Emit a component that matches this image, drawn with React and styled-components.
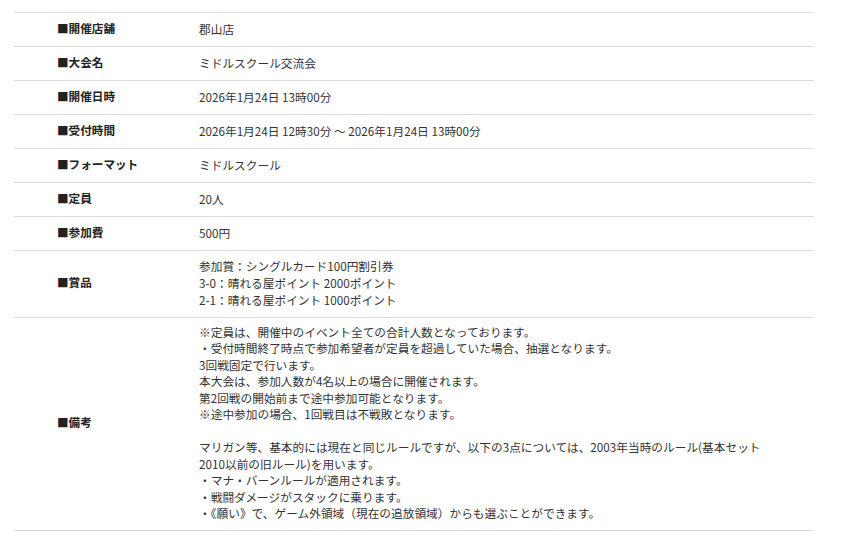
import React from 'react'
import styled, { createGlobalStyle } from 'styled-components'

const GlobalStyle = createGlobalStyle`
  body {
    margin: 0;
    background: #fff;
    font-family: "Noto Sans CJK JP", "Noto Sans", sans-serif;
  }
`

const rows = [
  { label: '開催店舗', value: ['郡山店'] },
  { label: '大会名', value: ['ミドルスクール交流会'] },
  { label: '開催日時', value: ['2026年1月24日 13時00分'] },
  { label: '受付時間', value: ['2026年1月24日 12時30分 〜 2026年1月24日 13時00分'] },
  { label: 'フォーマット', value: ['ミドルスクール'] },
  { label: '定員', value: ['20人'] },
  { label: '参加費', value: ['500円'] },
  {
    label: '賞品',
    pad: 7.5,
    value: [
      '参加賞：シングルカード100円割引券',
      '3-0：晴れる屋ポイント 2000ポイント',
      '2-1：晴れる屋ポイント 1000ポイント'
    ]
  },
  {
    label: '備考',
    pad: 7,
    lh: 16.5,
    value: [
      '※定員は、開催中のイベント全ての合計人数となっております。',
      '・受付時間終了時点で参加希望者が定員を超過していた場合、抽選となります。',
      '3回戦固定で行います。',
      '本大会は、参加人数が4名以上の場合に開催されます。',
      '第2回戦の開始前まで途中参加可能となります。',
      '※途中参加の場合、1回戦目は不戦敗となります。',
      '',
      'マリガン等、基本的には現在と同じルールですが、以下の3点については、2003年当時のルール(基本セット',
      '2010以前の旧ルール)を用います。',
      '・マナ・バーンルールが適用されます。',
      '・戦闘ダメージがスタックに乗ります。',
      '・《願い》で、ゲーム外領域（現在の追放領域）からも選ぶことができます。'
    ]
  }
]

class App extends React.Component {
  render() {
    return (
      <>
        <GlobalStyle />
        <Table>
          {rows.map(r => (
            <Row key={r.label} $pad={r.pad || 8} $lh={r.lh || 17}>
              <Label>■{r.label}</Label>
              <Value>
                {r.value.map((line, i) => (
                  <Line key={i}>{line || '\u00a0'}</Line>
                ))}
              </Value>
            </Row>
          ))}
        </Table>
      </>
    )
  }
}

export default App

const Table = styled.div`
  margin: 12px 0 0 14px;
  width: 800px;
  border-top: 1px solid #dddddd;
`

const Row = styled.div`
  display: grid;
  grid-template-columns: 185px 1fr;
  align-items: center;
  border-bottom: 1px solid #dddddd;
  padding: ${p => p.$pad - 1.5}px 0 ${p => p.$pad + 1.5}px;
  line-height: ${p => p.$lh}px;
`

const Label = styled.div`
  padding-left: 43px;
  font-size: 11.6px;
  font-weight: bold;
  color: #222;
`

const Value = styled.div`
  font-size: 11.7px;
  color: #333;
`

const Line = styled.div`
  white-space: nowrap;
`
